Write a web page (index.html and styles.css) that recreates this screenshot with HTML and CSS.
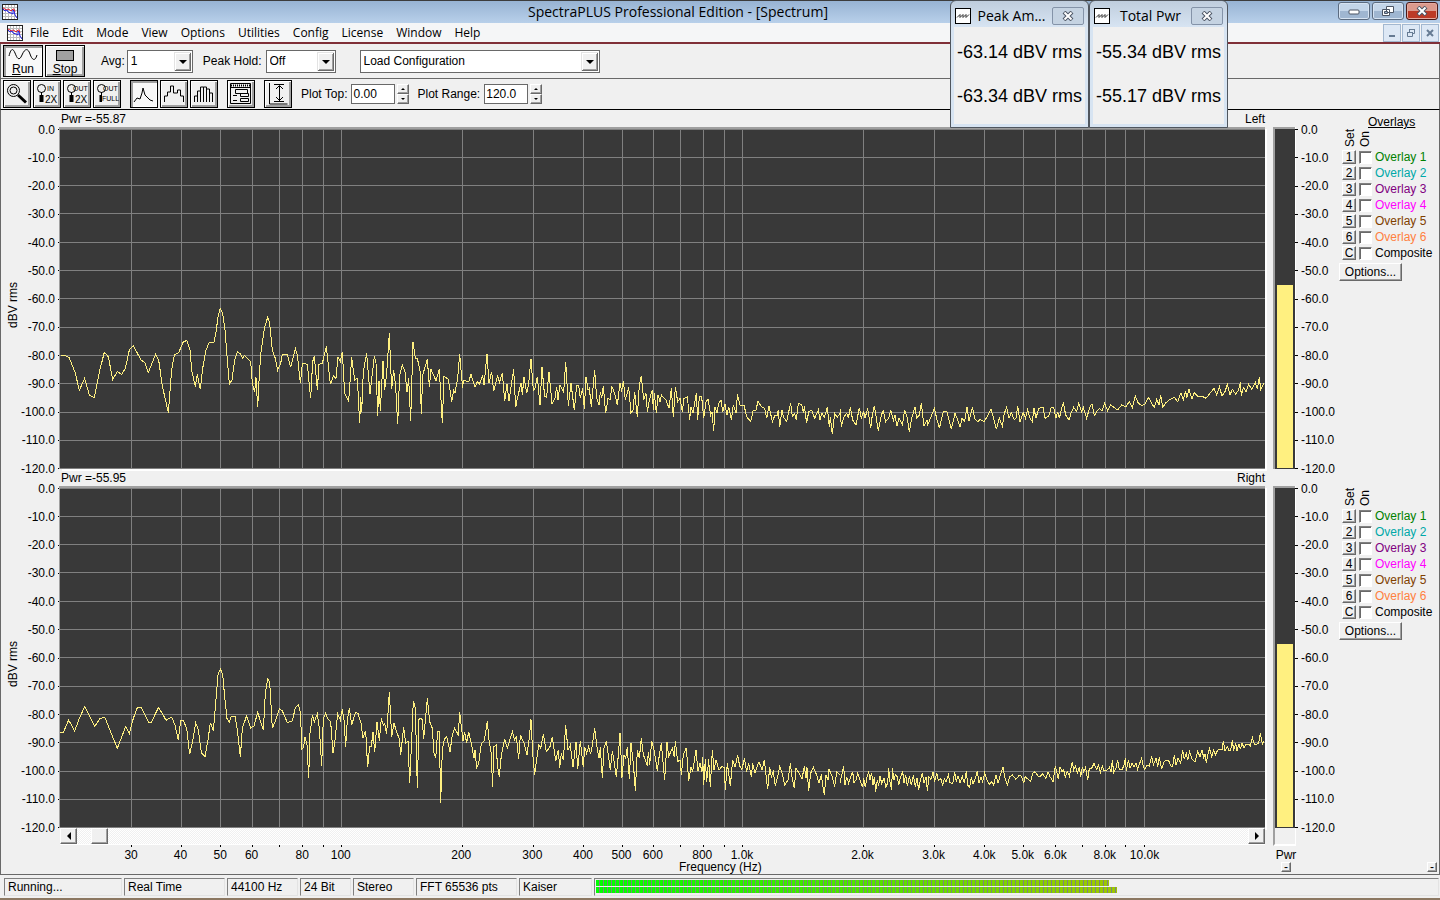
FILE: index.html
```html
<!DOCTYPE html>
<html lang="en">
<head>
    <meta charset="UTF-8">
    <meta name="viewport" content="width=device-width, initial-scale=1.0">
    <title>SpectraPLUS Professional Edition - [Spectrum]</title>
    <link rel="stylesheet" href="styles.css">
</head>
<body>
    <!-- Shared drawings -->
    <svg class="defs" aria-hidden="true">
        <symbol id="app-icon" viewBox="0 0 16 16">
            <rect x=".5" y=".5" width="15" height="15" fill="#fff" stroke="#222"/>
            <path d="M3.5 1v14M6.5 1v14M9.5 1v14M12.5 1v14M1 3.5h14M1 6.5h14M1 9.5h14M1 12.5h14" stroke="#bbb"/>
            <path d="M1 4l2 1 1 1 2-1 2 1 1 1 2-2h1l1 3" fill="none" stroke="#e02030"/>
            <path d="M1 5l2 2 2-1 1 2 3 1 2 1V6l1 1 1 4 2 3" fill="none" stroke="#2020e0"/>
        </symbol>
        <symbol id="wave-icon" viewBox="0 0 16 16">
            <rect x=".5" y=".5" width="15" height="15" fill="#fff" stroke="#000"/>
            <path d="M2 9.500l3-3v3l3-3v3l3-3v3l3-3" fill="none" stroke="#333"/>
        </symbol>
        <symbol id="close-icon" viewBox="0 0 12 10">
            <path d="M2 1l8 8M10 1L2 9" stroke="#4c5564" stroke-width="4"/>
            <path d="M2.500 1.500l7 7M9.500 1.500l-7 7" stroke="#fff" stroke-width="2"/>
        </symbol>
        <symbol id="lens" viewBox="0 0 24 24">
            <circle cx="6.500" cy="6.500" r="4"/>
            <path d="M6.500 10v3"/>
            <path d="M6.500 13v7" stroke-width="4"/>
        </symbol>
        <symbol id="grid" viewBox="0 0 3615 1020" preserveAspectRatio="none">
            <path vector-effect="non-scaling-stroke" d="M214 0V1020M364 0V1020M481 0V1020M577 0V1020M658 0V1020M727 0V1020M790 0V1020M844 0V1020M1207 0V1020M1420 0V1020M1570 0V1020M1687 0V1020M1780 0V1020M1861 0V1020M1930 0V1020M1993 0V1020M2047 0V1020M2410 0V1020M2623 0V1020M2773 0V1020M2890 0V1020M2986 0V1020M3067 0V1020M3136 0V1020M3196 0V1020M3253 0V1020M0 1H3615M0 85H3615M0 169H3615M0 253H3615M0 340H3615M0 424H3615M0 508H3615M0 595H3615M0 679H3615M0 763H3615M0 850H3615M0 934H3615M0 1018H3615"/>
        </symbol>
    </svg>

    <!-- Title bar -->
    <header class="titlebar">
        <svg class="app-icon"><use href="#app-icon"/></svg>
        <h1 class="title">SpectraPLUS Professional Edition - [Spectrum]</h1>
        <div class="window-buttons">
            <button class="win-btn" aria-label="Minimize"><svg viewBox="0 0 12 10"><rect x="1" y="4" width="10" height="4" rx="1" fill="#fff" stroke="#4c5564"/></svg></button>
            <button class="win-btn" aria-label="Restore"><svg viewBox="0 0 12 10"><path d="M4.500.5h7v6h-7z M.5 3.500h7v6h-7z" fill="#fff" stroke="#4c5564"/><path d="M2.500 5.500h3v2h-3z" fill="#9db4cf" stroke="#4c5564"/></svg></button>
            <button class="win-btn win-close" aria-label="Close"><svg><use href="#close-icon"/></svg></button>
        </div>
    </header>

    <!-- Menu bar -->
    <nav class="menubar">
        <svg class="app-icon"><use href="#app-icon"/></svg>
        <div class="menu">
            <a href="#">File</a>
            <a href="#">Edit</a>
            <a href="#">Mode</a>
            <a href="#">View</a>
            <a href="#">Options</a>
            <a href="#">Utilities</a>
            <a href="#">Config</a>
            <a href="#">License</a>
            <a href="#">Window</a>
            <a href="#">Help</a>
        </div>
        <div class="mdi-buttons">
            <button class="mdi-btn" aria-label="Minimize document"><svg viewBox="0 0 10 10"><path d="M2 8h6" stroke-width="2"/></svg></button>
            <button class="mdi-btn" aria-label="Restore document"><svg viewBox="0 0 10 10"><path d="M3.500 4V1.500h5v4H7M1.500 4.500h5v4h-5zM3 1.500h6M1 4.500h6"/></svg></button>
            <button class="mdi-btn" aria-label="Close document"><svg viewBox="0 0 10 10"><path d="M2 2l6 6M8 2L2 8" stroke-width="2"/></svg></button>
        </div>
    </nav>

    <!-- Run toolbar -->
    <div class="toolbar toolbar-run">
        <button class="tool-btn run-btn pressed">
            <svg viewBox="0 0 30 14"><path d="M1 8C3 0 5 0 7 5S11 14 14 7S20 0 22 6S27 14 29 7"/></svg>
            <span><u>R</u>un</span>
        </button>
        <button class="tool-btn run-btn">
            <svg viewBox="0 0 30 14"><rect x="6.500" y="2.500" width="17" height="10" fill="#a0a0a0"/></svg>
            <span><u>S</u>top</span>
        </button>
        <label class="field avg">Avg:
            <span class="combo combo-avg"><select><option>1</option></select></span>
        </label>
        <label class="field peak">Peak Hold:
            <span class="combo combo-peak"><select><option>Off</option></select></span>
        </label>
        <span class="combo combo-config"><select aria-label="Configuration"><option>Load Configuration</option></select></span>
    </div>

    <!-- Plot toolbar -->
    <div class="toolbar toolbar-plot">
        <div class="tool-group">
            <button class="tool-btn" aria-label="Zoom"><svg viewBox="0 0 24 24"><circle cx="8.500" cy="8.500" r="6"/><circle cx="8.500" cy="8.500" r="3.500"/><path d="M13 13l8 7.500" stroke-width="3"/></svg></button>
            <button class="tool-btn" aria-label="Zoom in 2X"><svg viewBox="0 0 24 24"><use href="#lens" width="24" height="24"/><text x="12" y="9">IN</text><text class="big" x="10" y="21">2X</text></svg></button>
            <button class="tool-btn" aria-label="Zoom out 2X"><svg viewBox="0 0 24 24"><use href="#lens" width="24" height="24"/><text x="8" y="9">OUT</text><text class="big" x="10" y="21">2X</text></svg></button>
            <button class="tool-btn" aria-label="Zoom out full"><svg viewBox="0 0 24 24"><use href="#lens" width="24" height="24"/><text x="8" y="9">OUT</text><rect class="mask" x="7" y="12" width="16" height="8"/><text x="7" y="19">FULL</text></svg></button>
        </div>
        <div class="tool-group">
            <button class="tool-btn pressed" aria-label="Line plot"><svg viewBox="0 0 24 24"><path d="M2 20l3-4 3 1 2-6 1-5 2 7 3 3 2 2 3 1"/></svg></button>
            <button class="tool-btn" aria-label="Step plot"><svg viewBox="0 0 24 24"><path d="M2.500 20v-6h3v-4h3v-6h3v7h4v-3h3v6h3v6"/></svg></button>
            <button class="tool-btn" aria-label="Bar plot"><svg viewBox="0 0 24 24"><path d="M2.500 20v-6h3v6v-11h3v11v-15h3v15v-15h3v15v-13h3v13v-9h3v9"/></svg></button>
        </div>
        <button class="tool-btn" aria-label="Settings"><svg viewBox="0 0 24 24"><path d="M1.500 1.500h20v20h-20zM1.500 5.500h20M6.500 7.500h12v4h-12zM11.500 11.500h8v3h-8zM11.500 16.500h8v3h-8zM4 13.500h4M4 18.500h4"/><path d="M2 3.500h19" stroke-width="2" stroke-dasharray="1 1"/></svg></button>
        <button class="tool-btn" aria-label="Fit vertically"><svg viewBox="0 0 24 24"><path d="M3.500 1v21h18M8 2.500h10M8 19.500h10M13.500 4v15M10 7l3.500-3.500L17 7M10 15l3.500 3.500L17 15"/></svg></button>
        <div class="field plot-field">
            <label for="plotTop">Plot Top:</label>
            <input id="plotTop" type="text" value="0.00">
            <span class="spinner"><button aria-label="Top up"><i class="tri up"></i></button><button aria-label="Top down"><i class="tri down"></i></button></span>
        </div>
        <div class="field plot-field">
            <label for="plotRange">Plot Range:</label>
            <input id="plotRange" type="text" value="120.0">
            <span class="spinner"><button aria-label="Range up"><i class="tri up"></i></button><button aria-label="Range down"><i class="tri down"></i></button></span>
        </div>
    </div>

    <!-- Spectrum -->
    <main class="spectrum">
        <section class="channel">
            <div class="axis-title"><span>dBV rms</span></div>
            <ul class="scale scale-left">
                <li>0.0</li><li>-10.0</li><li>-20.0</li><li>-30.0</li><li>-40.0</li><li>-50.0</li><li>-60.0</li><li>-70.0</li><li>-80.0</li><li>-90.0</li><li>-100.0</li><li>-110.0</li><li>-120.0</li>
            </ul>
            <div class="plot-column">
                <div class="plot-header"><span>Pwr =-55.87</span><span>Left</span></div>
                <div class="plot">
                    <svg viewBox="0 0 3615 1020" preserveAspectRatio="none">
                        <use href="#grid" width="3615" height="1020"/>
                        <polyline transform="translate(-180 453)" points="183,227 197,227 207,232 225,276 238,331 254,295 268,345 283,353 300,268 313,217 325,230 338,298 352,275 365,283 376,265 388,210 400,197 423,240 434,247 445,277 467,223 476,240 487,318 505,398 515,270 523,225 536,218 549,187 560,181 570,210 575,270 586,320 592,283 601,328 608,265 618,210 628,187 642,187 648,155 655,105 661,85 668,100 675,150 682,240 688,313 696,300 704,240 712,215 722,222 728,234 733,226 752,245 757,310 764,337 768,292 773,382 778,285 783,215 793,145 803,112 809,130 817,210 826,235 833,270 842,250 847,223 862,223 872,262 886,205 892,225 901,310 907,250 922,253 932,355 938,245 943,228 952,330 957,253 967,250 979,199 991,313 1000,288 1008,295 1014,230 1021,245 1027,216 1034,340 1046,364 1055,232 1064,300 1072,295 1079,430 1082,350 1085,397 1090,275 1100,220 1110,343 1123,228 1128,250 1133,408 1137,302 1141,393 1149,242 1154,330 1160,280 1168,160 1175,328 1181,270 1187,320 1193,433 1199,285 1207,255 1215,275 1221,337 1226,295 1232,422 1239,187 1246,235 1252,235 1260,272"/>
                        <polyline transform="translate(1080 603)" points="0,122 4,253 8,135 14,115 22,88 28,170 33,118 48,152 58,118 67,280 72,140 85,147 95,215 101,180 105,188 113,145 119,73 128,175 130,150 146,156 153,133 165,172 172,155 178,163 188,135 192,165 201,72 207,160 215,125 221,183 233,135 238,158 247,130 254,213 261,162 267,213 274,165 281,118 287,232 292,205 303,160 307,195 312,140 320,190 326,160 333,88 340,180 345,175 352,140 360,225 366,112 374,200 380,202 387,125 396,222 405,205 410,170 414,210 420,165 431,187 437,95 445,227 453,160 463,240 470,165 476,165 481,205 488,175 493,238 498,140 504,180 508,175 514,230 524,120 530,205 537,225 541,185 545,205 550,168 557,250 564,205 570,210 576,170 584,190 592,225 600,160 605,185 610,152 616,210 626,172 633,250 639,240 644,185 652,262 658,165 664,138 671,210 678,190 682,245 688,210 697,180 700,240 703,190 709,250 714,195 720,215 724,195 738,210 747,235 754,175 760,262 766,170 773,215 780,205 787,245 792,205 802,200 809,270 813,230 819,250 829,190 833,270 838,200 845,200 851,265 858,215 864,208 872,255 876,245 881,303 885,230 891,250 896,220 903,210 908,245 915,222 921,255 926,230 934,270 940,225 949,250 952,193 960,225 972,225 980,260 992,275 1000,240 1008,240 1014,213 1024,230 1034,235 1040,265 1047,228 1057,275 1065,255 1071,258 1075,240 1079,292 1086,240 1090,260 1100,275 1112,218 1117,260 1124,250 1129,270 1135,220 1145,225 1151,250 1153,228 1160,280 1166,245 1175,240 1184,265 1195,240 1200,270 1206,248 1213,262 1222,232 1228,290 1231,260 1237,313 1244,250 1252,262 1260,250"/>
                        <polyline transform="translate(2340 663)" points="0,175 4,230 12,200 20,190 25,205 31,172 38,210 48,225 58,173 64,205 71,185 75,205 83,175 92,235 97,195 103,168 109,205 115,242 124,195 130,183 137,215 146,205 152,180 160,212 165,195 171,228 177,205 187,225 194,180 202,205 208,247 215,205 225,170 230,205 238,195 244,160 252,228 261,210 262,228 275,195 283,175 290,205 298,235 310,185 320,183 334,238 345,190 353,210 360,232 366,205 374,215 381,170 387,212 397,172 405,208 413,215 420,208 432,215 442,200 453,178 461,205 469,238 478,205 487,228 493,190 500,172 507,205 514,188 522,208 528,205 533,168 540,215 550,188 556,205 563,178 570,205 577,215 582,175 588,205 596,175 609,172 615,205 626,198 634,172 641,172 648,205 653,185 658,205 664,180 670,157 677,195 687,210 693,190 701,172 710,185 716,160 725,185 730,172 740,205 750,170 756,162 763,197 772,182 778,175 786,182 794,160 803,182 812,165 822,172 833,180 845,165 858,170 868,155 877,172 886,138 894,158 905,167 915,162 925,142 935,160 943,172 950,148 957,165 962,135 968,172 978,158 988,150 1003,142 1013,155 1023,128 1030,150 1037,123 1040,145 1047,118 1056,148 1063,128 1072,138 1085,138 1098,145 1110,130 1122,115 1130,135 1138,110 1146,138 1155,125 1162,103 1170,135 1177,118 1187,132 1196,120 1201,97 1204,138 1210,112 1218,125 1226,103 1236,118 1246,97 1252,118 1258,82 1262,118 1268,108 1272,100"/>
                    </svg>
                </div>
            </div>
            <div class="meter"><div class="meter-fill" style="height: 54%"></div></div>
            <ul class="scale scale-right">
                <li>0.0</li><li>-10.0</li><li>-20.0</li><li>-30.0</li><li>-40.0</li><li>-50.0</li><li>-60.0</li><li>-70.0</li><li>-80.0</li><li>-90.0</li><li>-100.0</li><li>-110.0</li><li>-120.0</li>
            </ul>
            <aside class="overlays">
                <h2>Overlays</h2>
                <div class="overlay-head"><span>Set</span><span>On</span></div>
                <div class="overlay"><button>1</button><input type="checkbox" id="l1"><label for="l1" class="c1">Overlay 1</label></div>
                <div class="overlay"><button>2</button><input type="checkbox" id="l2"><label for="l2" class="c2">Overlay 2</label></div>
                <div class="overlay"><button>3</button><input type="checkbox" id="l3"><label for="l3" class="c3">Overlay 3</label></div>
                <div class="overlay"><button>4</button><input type="checkbox" id="l4"><label for="l4" class="c4">Overlay 4</label></div>
                <div class="overlay"><button>5</button><input type="checkbox" id="l5"><label for="l5" class="c5">Overlay 5</label></div>
                <div class="overlay"><button>6</button><input type="checkbox" id="l6"><label for="l6" class="c6">Overlay 6</label></div>
                <div class="overlay"><button>C</button><input type="checkbox" id="lc"><label for="lc">Composite</label></div>
                <button class="options-btn">Options...</button>
            </aside>
        </section>

        <section class="channel">
            <div class="axis-title"><span>dBV rms</span></div>
            <ul class="scale scale-left">
                <li>0.0</li><li>-10.0</li><li>-20.0</li><li>-30.0</li><li>-40.0</li><li>-50.0</li><li>-60.0</li><li>-70.0</li><li>-80.0</li><li>-90.0</li><li>-100.0</li><li>-110.0</li><li>-120.0</li>
            </ul>
            <div class="plot-column">
                <div class="plot-header"><span>Pwr =-55.95</span><span>Right</span></div>
                <div class="plot">
                    <svg viewBox="0 0 3615 1020" preserveAspectRatio="none">
                        <use href="#grid" width="3615" height="1020"/>
                        <polyline transform="translate(-180 456)" points="180,277 190,277 206,240 224,273 238,235 254,200 284,259 300,236 314,231 352,325 377,260 388,280 400,235 412,203 424,203 446,247 454,247 475,203 487,220 498,241 515,231 525,255 535,300 542,242 550,242 560,265 569,343 577,308 587,248 595,270 604,338 615,350 624,300 631,248 640,273 647,190 654,105 661,87 668,103 674,170 681,235 688,246 694,228 705,228 712,270 721,352 727,265 740,227 752,264 762,258 773,217 790,270 796,160 803,117 809,125 817,265 826,243 838,206 847,213 862,248 877,243 886,203 895,195 901,215 906,328 911,320 915,290 921,315 926,415 930,280 937,226 943,245 952,222 958,265 965,377 970,235 977,220 984,238 992,245 999,340 1005,300 1013,222 1021,240 1027,208 1032,240 1037,320 1042,240 1048,203 1055,255 1066,218 1074,220 1083,250 1089,293 1097,272 1103,382 1109,320 1114,320 1119,275 1124,337 1131,245 1138,303 1144,235 1150,255 1154,250 1160,282 1168,155 1175,290 1182,250 1190,275 1198,298 1202,345 1211,262 1217,310 1224,303 1229,430 1235,300 1240,182 1246,205 1252,445 1257,238 1260,235"/>
                        <polyline transform="translate(1080 576)" points="0,115 7,118 11,178 22,55 29,125 37,145 42,220 47,235 53,155 58,155 62,370 67,210 73,178 80,170 90,215 97,165 104,145 115,165 119,97 129,182 134,155 140,190 146,155 154,190 162,235 165,210 170,262 176,250 184,190 193,182 202,123 207,180 213,215 218,320 221,200 229,195 232,255 238,290 244,225 254,178 262,205 277,155 284,180 289,168 296,238 301,165 312,190 321,225 327,180 333,118 338,220 344,285 350,238 356,195 362,205 370,163 379,215 390,200 397,170 407,243 415,210 419,265 424,220 430,240 437,135 444,210 451,195 459,262 468,185 473,268 481,182 490,262 494,200 500,220 506,200 512,222 517,195 524,145 533,215 537,235 541,202 547,293 552,205 559,182 571,270 577,212 583,250 589,290 595,225 600,158 606,293 612,225 617,235 622,200 628,298 633,190 640,250 646,332 652,210 658,235 664,175 670,225 676,238 682,258 685,215 689,255 695,182 702,210 712,272 718,225 724,190 734,300 741,185 746,230 757,205 763,232 766,183 773,245 780,240 784,285 790,225 799,203 806,303 813,260 818,275 828,210 834,272 840,250 846,275 848,230 851,315 856,238 860,305 866,238 871,320 877,210 882,270 888,240 897,270 905,260 913,262 916,330 922,250 931,318 938,240 945,262 953,225 959,258 966,268 973,235 980,275 986,250 994,290 998,250 1005,278 1017,245 1026,270 1033,240 1043,328 1049,262 1054,290 1060,275 1066,318 1073,290 1079,260 1086,278 1094,315 1104,300 1111,250 1116,290 1123,325 1128,265 1138,280 1146,298 1153,258 1158,295 1161,262 1166,332 1172,280 1180,262 1190,285 1197,310 1204,283 1208,315 1213,345 1218,285 1224,300 1227,268 1235,285 1244,320 1250,275 1260,285"/>
                        <polyline transform="translate(2340 726)" points="0,158 4,140 11,108 15,165 20,140 26,160 33,138 38,125 42,158 48,150 53,130 58,145 68,172 71,145 76,172 80,145 86,124 90,150 95,128 99,165 103,140 107,185 112,150 116,168 120,138 125,160 132,145 138,172 143,158 146,115 150,155 155,180 157,115 162,150 166,135 172,140 176,165 182,140 188,124 192,160 197,135 202,168 208,138 214,165 220,135 226,170 231,145 236,180 240,155 247,128 252,160 258,140 262,182 267,140 273,148 279,127 284,155 290,128 295,152 302,145 308,165 313,145 318,155 325,135 330,158 338,162 344,125 349,155 354,138 360,158 367,140 373,160 379,122 383,165 389,172 394,140 399,162 406,145 412,124 417,158 423,140 428,155 434,128 441,150 448,162 455,155 461,165 468,135 474,160 480,138 489,110 494,140 502,165 509,140 517,135 528,148 538,135 545,140 551,160 555,140 565,148 572,155 578,130 585,125 594,138 602,138 608,132 618,145 624,125 630,140 639,155 646,108 651,130 655,148 660,110 666,125 671,120 676,142 682,125 688,138 697,95 701,120 706,108 712,128 718,110 722,142 727,110 731,125 737,112 743,150 748,115 755,115 762,100 770,118 776,105 781,128 787,108 792,122 800,122 808,112 813,125 817,90 821,128 828,115 833,90 838,118 846,120 852,105 856,85 859,122 865,90 870,115 876,100 882,112 888,100 893,118 899,100 905,85 910,108 914,118 922,105 928,108 935,78 940,105 948,85 953,110 958,82 965,118 972,95 978,90 985,90 993,108 998,110 1003,75 1008,105 1014,85 1022,100 1028,60 1033,88 1039,70 1043,90 1049,65 1056,88 1065,95 1073,65 1080,80 1086,60 1091,82 1095,72 1099,100 1103,75 1109,55 1115,80 1121,60 1126,75 1133,60 1140,58 1146,60 1150,32 1155,62 1162,50 1167,62 1172,60 1177,30 1181,62 1187,40 1191,62 1197,42 1201,58 1206,38 1212,55 1218,42 1226,42 1231,48 1237,22 1243,42 1250,42 1256,40 1261,10 1267,42 1272,35"/>
                    </svg>
                </div>
            </div>
            <div class="meter"><div class="meter-fill" style="height: 54%"></div></div>
            <ul class="scale scale-right">
                <li>0.0</li><li>-10.0</li><li>-20.0</li><li>-30.0</li><li>-40.0</li><li>-50.0</li><li>-60.0</li><li>-70.0</li><li>-80.0</li><li>-90.0</li><li>-100.0</li><li>-110.0</li><li>-120.0</li>
            </ul>
            <aside class="overlays">
                <div class="overlay-head"><span>Set</span><span>On</span></div>
                <div class="overlay"><button>1</button><input type="checkbox" id="r1"><label for="r1" class="c1">Overlay 1</label></div>
                <div class="overlay"><button>2</button><input type="checkbox" id="r2"><label for="r2" class="c2">Overlay 2</label></div>
                <div class="overlay"><button>3</button><input type="checkbox" id="r3"><label for="r3" class="c3">Overlay 3</label></div>
                <div class="overlay"><button>4</button><input type="checkbox" id="r4"><label for="r4" class="c4">Overlay 4</label></div>
                <div class="overlay"><button>5</button><input type="checkbox" id="r5"><label for="r5" class="c5">Overlay 5</label></div>
                <div class="overlay"><button>6</button><input type="checkbox" id="r6"><label for="r6" class="c6">Overlay 6</label></div>
                <div class="overlay"><button>C</button><input type="checkbox" id="rc"><label for="rc">Composite</label></div>
                <button class="options-btn">Options...</button>
            </aside>
        </section>

        <!-- Frequency axis -->
        <section class="bottom-axis">
            <div class="freq-column">
                <div class="scrollbar">
                    <button aria-label="Scroll left"><i class="tri left"></i></button>
                    <input type="range" min="0" max="1000" value="12" aria-label="Frequency position">
                    <button aria-label="Scroll right"><i class="tri right"></i></button>
                </div>
                <svg class="freq-ticks" viewBox="0 0 3615 3" preserveAspectRatio="none"><path vector-effect="non-scaling-stroke" d="M214 0v3M364 0v3M481 0v3M577 0v3M658 0v3M727 0v3M790 0v3M844 0v3M1207 0v3M1420 0v3M1570 0v3M1687 0v3M1780 0v3M1861 0v3M1930 0v3M1993 0v3M2047 0v3M2410 0v3M2623 0v3M2773 0v3M2890 0v3M2986 0v3M3067 0v3M3136 0v3M3196 0v3M3253 0v3"/></svg>
                <svg class="freq-labels">
                    <text x="5.9%" y="12">30</text>
                    <text x="10%" y="12">40</text>
                    <text x="13.3%" y="12">50</text>
                    <text x="15.9%" y="12">60</text>
                    <text x="20.1%" y="12">80</text>
                    <text x="23.3%" y="12">100</text>
                    <text x="33.3%" y="12">200</text>
                    <text x="39.2%" y="12">300</text>
                    <text x="43.4%" y="12">400</text>
                    <text x="46.6%" y="12">500</text>
                    <text x="49.2%" y="12">600</text>
                    <text x="53.3%" y="12">800</text>
                    <text x="56.6%" y="12">1.0k</text>
                    <text x="66.6%" y="12">2.0k</text>
                    <text x="72.5%" y="12">3.0k</text>
                    <text x="76.7%" y="12">4.0k</text>
                    <text x="79.9%" y="12">5.0k</text>
                    <text x="82.6%" y="12">6.0k</text>
                    <text x="86.7%" y="12">8.0k</text>
                    <text x="90%" y="12">10.0k</text>
                    <text x="54.8%" y="24">Frequency (Hz)</text>
                </svg>
            </div>
            <div class="meter-foot">
                <div class="meter-end"></div>
                <span>Pwr</span>
                <button class="mini-btn" aria-label="Hide power meter">-</button>
            </div>
            <button class="mini-btn" aria-label="Hide overlays">-</button>
        </section>
    </main>

    <!-- Status bar -->
    <footer class="statusbar">
        <span class="cell w-state">Running...</span>
        <span class="cell w-mode">Real Time</span>
        <span class="cell w-rate">44100 Hz</span>
        <span class="cell w-bits">24 Bit</span>
        <span class="cell w-chan">Stereo</span>
        <span class="cell w-fft">FFT 65536 pts</span>
        <span class="cell w-window">Kaiser</span>
        <div class="cell levels">
            <div class="level" style="width: 61%"></div>
            <div class="level" style="width: 62%"></div>
        </div>
    </footer>
    <div class="desktop-edge"></div>

    <!-- Floating readouts -->
    <section class="readout readout-peak">
        <header>
            <svg class="app-icon"><use href="#wave-icon"/></svg>
            <h2>Peak Am...</h2>
            <button aria-label="Close peak amplitude"><svg><use href="#close-icon"/></svg></button>
        </header>
        <div class="values"><p>-63.14 dBV rms</p><p>-63.34 dBV rms</p></div>
    </section>
    <section class="readout readout-total">
        <header>
            <svg class="app-icon"><use href="#wave-icon"/></svg>
            <h2>Total Pwr</h2>
            <button aria-label="Close total power"><svg><use href="#close-icon"/></svg></button>
        </header>
        <div class="values"><p>-55.34 dBV rms</p><p>-55.17 dBV rms</p></div>
    </section>
</body>
</html>
```

FILE: styles.css
```css
* {
    margin: 0;
    padding: 0;
    box-sizing: border-box;
}

body {
    display: flex;
    flex-direction: column;
    min-height: 100vh;
    position: relative;
    background: #f0f0f0;
    color: #000;
    font-family: "Liberation Sans", Arial, sans-serif;
    font-size: 12px;
    line-height: 14px;
}

button,
input,
select {
    font: inherit;
    color: inherit;
}

ul {
    list-style: none;
}

svg {
    display: block;
}

.defs {
    position: absolute;
    width: 0;
    height: 0;
}

.app-icon {
    width: 16px;
    height: 16px;
    flex: none;
}

/* Title bar */
.titlebar {
    display: flex;
    align-items: center;
    height: 23px;
    padding: 0 2px;
    border-top: 1px solid #3c3c3c;
    background: linear-gradient(#97b3d3, #b8d0ea);
}

.title {
    flex: 1;
    text-align: center;
    font: 14px/20px "Open Sans", "Noto Sans", sans-serif;
}

.window-buttons {
    display: flex;
    gap: 2px;
    align-self: flex-start;
    padding-top: 1px;
}

.win-btn {
    display: flex;
    align-items: center;
    justify-content: center;
    width: 32px;
    height: 18px;
    border: 1px solid #5b6b80;
    border-radius: 3px;
    background: linear-gradient(#c3d5e9 50%, #9fb6d1 50%);
    box-shadow: inset 0 0 0 1px #d6e3f2;
}

.win-btn svg {
    width: 12px;
    height: 10px;
}

.win-close {
    border-color: #4a1a18;
    background: linear-gradient(#dc9a8d 50%, #bc3a26 50%);
    box-shadow: inset 0 0 0 1px #e5a99e;
}

/* Menu bar */
.menubar {
    display: flex;
    align-items: center;
    height: 21px;
    padding: 0 1px 0 7px;
    border-bottom: 2px solid #803038;
    background: #f5f6f7;
}

.menu {
    display: flex;
    flex: 1;
    gap: 13px;
    padding-left: 7px;
}

.menu a {
    color: #000;
    text-decoration: none;
    font: 12px/18px "Open Sans", "Noto Sans", sans-serif;
}

.mdi-buttons {
    display: flex;
    gap: 1px;
}

.mdi-btn {
    display: flex;
    align-items: center;
    justify-content: center;
    width: 18px;
    height: 18px;
    border: 1px solid #a3b8d0;
    background: #dde8f5;
}

.mdi-btn svg {
    width: 10px;
    height: 10px;
    fill: none;
    stroke: #667b93;
}

/* Toolbars */
.toolbar {
    display: flex;
    align-items: center;
    padding-left: 2px;
    border-left: 1px solid #696969;
    border-right: 1px solid #696969;
}

.toolbar-run {
    height: 35px;
    border-bottom: 1px solid #696969;
}

.toolbar-plot {
    height: 31px;
    border-bottom: 1px solid #000;
}

.tool-group {
    display: flex;
    gap: 2px;
    margin-right: 9px;
}

.tool-btn {
    width: 28px;
    height: 28px;
    border: 1px solid #000;
    background: #f0f0f0;
    box-shadow: inset 1px 1px #fff, inset -2px -2px #a0a0a0;
}

.tool-btn.pressed {
    background: #f8f8f8;
    box-shadow: inset 2px 2px #a0a0a0, inset -1px -1px #fff;
}

.tool-btn svg {
    width: 24px;
    height: 24px;
    margin: 0 auto;
    fill: none;
    stroke: #000;
}

.tool-btn svg text {
    fill: #000;
    stroke: none;
    font-size: 7px;
}

.tool-btn svg .big {
    font-size: 10px;
}

.tool-btn svg .mask {
    fill: #f0f0f0;
    stroke: none;
}

.toolbar-plot > .tool-btn {
    margin-right: 9px;
}

.tool-btn.run-btn {
    display: flex;
    flex-direction: column;
    align-items: center;
    width: 40px;
    height: 32px;
    margin-right: 2px;
    padding-top: 2px;
    line-height: 14px;
}

.run-btn svg {
    width: 30px;
    height: 14px;
}

.field {
    display: flex;
    align-items: center;
}

.avg {
    gap: 2px;
    margin-left: 14px;
}

.peak {
    gap: 4px;
    margin: 0 24px 0 10px;
}

.combo {
    position: relative;
    height: 23px;
}

.combo select {
    width: 100%;
    height: 100%;
    appearance: none;
    padding-left: 3px;
    border: 1px solid #696969;
    border-radius: 0;
    background: #fff;
    color: #000;
}

.combo::before,
.combo::after {
    content: "";
    position: absolute;
    pointer-events: none;
}

.combo::before {
    top: 2px;
    right: 2px;
    width: 17px;
    height: 19px;
    background: #f0f0f0;
    box-shadow: inset 1px 1px #e3e3e3, inset -1px -1px #696969, inset 2px 2px #fff, inset -2px -2px #a0a0a0;
}

.combo::after {
    top: 10px;
    right: 6px;
    border: 4px solid transparent;
    border-top-color: #000;
    border-bottom: 0;
}

.combo-avg {
    width: 66px;
}

.combo-peak {
    width: 70px;
}

.combo-config {
    width: 240px;
}

.plot-field {
    margin-right: 8px;
}

.plot-field input {
    width: 44px;
    height: 20px;
    margin: 0 2px 0 4px;
    padding-left: 1px;
    border: 1px solid #696969;
    background: #fff;
}

.spinner {
    display: flex;
    flex-direction: column;
}

.spinner button,
.scrollbar button,
.overlay button,
.options-btn,
.mini-btn {
    border: 1px solid;
    border-color: #fff #696969 #696969 #fff;
    background: #f0f0f0;
    box-shadow: inset -1px -1px #a0a0a0;
}

.spinner button {
    display: flex;
    align-items: center;
    justify-content: center;
    width: 12px;
    height: 10px;
}

.tri {
    border: 4px solid transparent;
}

.tri.up {
    border-width: 0 2px 2px;
    border-bottom-color: #000;
}

.tri.down {
    border-width: 2px 2px 0;
    border-top-color: #000;
}

.tri.left {
    border-left: 0;
    border-right-color: #000;
}

.tri.right {
    border-right: 0;
    border-left-color: #000;
}

/* Spectrum */
.spectrum {
    display: flex;
    flex: 1;
    flex-direction: column;
    gap: 2px;
    padding-top: 2px;
    border-left: 1px solid #696969;
    border-right: 1px solid #696969;
}

.channel {
    display: flex;
    flex: 1 1 0;
}

.axis-title {
    display: flex;
    align-items: center;
    width: 20px;
    padding: 30px 0 0 5px;
}

.axis-title span,
.overlay-head span {
    writing-mode: vertical-rl;
    transform: rotate(180deg);
}

.scale {
    display: flex;
    flex-direction: column;
    justify-content: space-between;
    padding-top: 17px;
}

.scale li {
    display: flex;
    align-items: center;
    height: 1px;
}

.scale-left {
    width: 39px;
}

.scale-left li {
    justify-content: flex-end;
    gap: 3px;
}

.scale-left li::after,
.scale-right li::before {
    content: "";
    width: 2px;
    height: 1px;
    background: #000;
}

.scale-right {
    width: 42px;
}

.scale-right li {
    gap: 3px;
}

.scale-right li::before {
    width: 3px;
}

.plot-column {
    display: flex;
    flex: 1;
    flex-direction: column;
}

.plot-header {
    display: flex;
    justify-content: space-between;
    height: 15px;
    padding: 0 0 0 1px;
}

.plot {
    flex: 1;
    min-height: 0;
    position: relative;
    border-top: 2px solid #a0a0a0;
    background: #393939;
    box-shadow: -1px 0 #a0a0a0, 2px 2px #fff;
}

.plot svg {
    position: absolute;
    width: 100%;
    height: 100%;
    fill: none;
    stroke: #808080;
    shape-rendering: crispEdges;
}

.plot polyline {
    stroke: #fff080;
    vector-effect: non-scaling-stroke;
}

.meter {
    display: flex;
    align-items: flex-end;
    width: 22px;
    margin: 15px 0 0 8px;
    padding: 0 2px 1px;
    border: solid #a0a0a0;
    border-width: 2px 0 0 2px;
    background: #393939;
    box-shadow: 1px 0 #fff;
}

.meter-fill {
    width: 100%;
    background: #fff080;
}

/* Overlays */
.overlays {
    width: 102px;
    padding-left: 2px;
}

.overlays h2 {
    height: 14px;
    margin: 3px 0 0 29px;
    font-size: 12px;
    font-weight: normal;
    text-decoration: underline;
}

.overlay-head {
    display: flex;
    align-items: flex-end;
    gap: 1px;
    height: 18px;
    margin: 0 0 2px 4px;
}

.overlay-head:first-child {
    margin-top: 17px;
}

.overlay {
    display: flex;
    align-items: center;
    height: 16px;
    padding-left: 3px;
}

.overlay button {
    width: 14px;
    height: 14px;
    line-height: 12px;
}

.overlay input {
    appearance: none;
    width: 13px;
    height: 13px;
    margin: 0 3px;
    border: 1px solid;
    border-color: #808080 #fff #fff #808080;
    background: #fff;
    box-shadow: inset 1px 1px #696969;
}

.c1 { color: #008000; }
.c2 { color: #00a8a8; }
.c3 { color: #800080; }
.c4 { color: #ff00ff; }
.c5 { color: #804000; }
.c6 { color: #ff8040; }

.options-btn {
    width: 63px;
    height: 18px;
    margin-top: 2px;
}

/* Frequency axis */
.bottom-axis {
    display: flex;
    align-items: flex-start;
    height: 46px;
    margin-top: -2px;
    padding-left: 59px;
}

.freq-column {
    flex: 1;
}

.scrollbar {
    display: flex;
    position: relative;
    height: 17px;
    border-bottom: 1px solid #fff;
}

.scrollbar button {
    display: flex;
    align-items: center;
    justify-content: center;
    width: 17px;
}

.scrollbar input {
    flex: 1;
    appearance: none;
    background: repeating-conic-gradient(#fff 0 25%, #f0f0f0 0 50%) 0 0 / 2px 2px;
}

.scrollbar input::-webkit-slider-thumb {
    appearance: none;
    width: 17px;
    height: 16px;
    border: 1px solid;
    border-color: #fff #696969 #696969 #fff;
    background: #f0f0f0;
    box-shadow: inset -1px -1px #a0a0a0;
}

.freq-ticks {
    width: 100%;
    height: 2px;
    stroke: #000;
    shape-rendering: crispEdges;
}

.freq-labels {
    width: 100%;
    height: 26px;
    overflow: visible;
    text-anchor: middle;
}

.meter-foot {
    display: flex;
    flex-direction: column;
    align-items: center;
    width: 26px;
    margin-left: 8px;
}

.meter-end {
    align-self: flex-start;
    width: 22px;
    height: 18px;
    margin-bottom: 2px;
    border-left: 2px solid #a0a0a0;
    border-bottom: 2px solid #fff;
    box-shadow: 1px 0 #fff;
}

.mini-btn {
    width: 10px;
    height: 10px;
    line-height: 6px;
}

.bottom-axis > .mini-btn {
    margin: 34px 2px 0 128px;
}

/* Status bar */
.statusbar {
    display: flex;
    gap: 2px;
    height: 24px;
    padding: 3px 1px 2px 4px;
    border-top: 1px solid #696969;
}

.cell {
    flex: none;
    padding: 1px 3px;
    border: 1px solid;
    border-color: #808080 #e3e3e3 #e3e3e3 #808080;
    line-height: 15px;
}

.w-state { width: 118px; }
.w-mode { width: 101px; }
.w-rate { width: 71px; }
.w-bits { width: 51px; }
.w-chan { width: 61px; }
.w-fft { width: 101px; }
.w-window { width: 73px; }

.levels {
    display: flex;
    flex: 1;
    flex-direction: column;
    gap: 1px;
    padding: 1px;
}

.level {
    height: 6px;
    background: repeating-linear-gradient(90deg, transparent 0 3px, #808080 3px 4px), linear-gradient(90deg, #00ff00, #9cc800);
}

.desktop-edge {
    height: 2px;
    background: #8c7862;
}

/* Floating readouts */
.readout {
    position: absolute;
    top: 0;
    width: 139px;
    height: 128px;
    padding: 0 3px 3px;
    border: 1px solid #50565e;
    border-radius: 6px 6px 0 0;
    background: linear-gradient(#bfcddd, #d7e4f2 26px);
}

.readout-peak {
    left: 950px;
}

.readout-total {
    left: 1089px;
}

.readout header {
    display: flex;
    align-items: center;
    height: 26px;
    padding: 3px 1px 0;
}

.readout h2 {
    flex: 1;
    text-align: center;
    font: 14px/20px "Open Sans", "Noto Sans", sans-serif;
}

.readout header button {
    display: flex;
    align-items: center;
    justify-content: center;
    width: 32px;
    height: 18px;
    border: 1px solid #8493a8;
    border-radius: 2px;
    background: #c5d3e2;
}

.readout button svg {
    width: 12px;
    height: 10px;
}

.values {
    height: 97px;
    padding-top: 3px;
    background: #f0f0f0;
    text-align: center;
    font-size: 18px;
    line-height: 44px;
    white-space: nowrap;
}
```
